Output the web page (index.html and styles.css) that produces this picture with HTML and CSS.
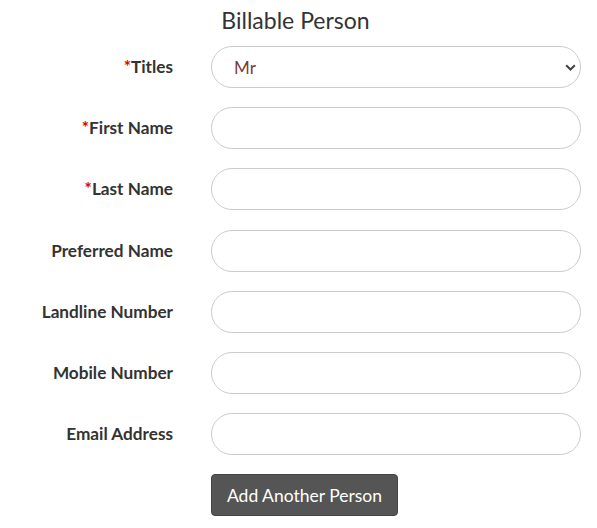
FILE: index.html
```html
<!DOCTYPE html>
<html>
<head>
<meta charset="utf-8">
<link rel="stylesheet" href="styles.css">
</head>
<body>
<div class="page">
  <h2 class="title">Billable Person</h2>
  <form class="form">
    <label class="label"><span class="req">*</span>Titles</label>
    <div class="field">
      <select class="control select">
        <option>Mr</option>
      </select>
      <svg class="chev" width="11" height="7" viewBox="0 0 11 7"><path d="M1.2 1.2 L5.5 5.5 L9.8 1.2" fill="none" stroke="#444" stroke-width="2"/></svg>
    </div>
    <label class="label"><span class="req">*</span>First Name</label>
    <div class="field"><input class="control" type="text"></div>
    <label class="label"><span class="req">*</span>Last Name</label>
    <div class="field"><input class="control" type="text"></div>
    <label class="label">Preferred Name</label>
    <div class="field"><input class="control" type="text"></div>
    <label class="label">Landline Number</label>
    <div class="field"><input class="control" type="text"></div>
    <label class="label">Mobile Number</label>
    <div class="field"><input class="control" type="text"></div>
    <label class="label">Email Address</label>
    <div class="field"><input class="control" type="text"></div>
    <div></div>
    <div class="field"><button type="button" class="btn">Add Another Person</button></div>
  </form>
</div>
</body>
</html>
```
FILE: styles.css
```css
html, body {
  margin: 0;
  padding: 0;
  background: #fff;
}
body {
  font-family: Lato, "Open Sans", sans-serif;
  color: #333;
}
.page {
  width: 597px;
}
.title {
  margin: 0;
  padding-top: 6px;
  padding-right: 6px;
  height: 46px;
  box-sizing: border-box;
  text-align: center;
  font-weight: 400;
  font-size: 23px;
  line-height: 28px;
  color: #333;
}
.form {
  display: grid;
  grid-template-columns: 173px 370px;
  column-gap: 38px;
  row-gap: 19.2px;
  align-items: center;
}
.label {
  text-align: right;
  font-weight: 700;
  font-size: 17.2px;
  line-height: 20px;
  margin-top: 0;
  color: #333;
}
.req {
  color: #e00000;
}
.field {
  position: relative;
  height: 42px;
}
.control {
  display: block;
  box-sizing: border-box;
  width: 370px;
  height: 42px;
  border: 1px solid #ccc;
  border-radius: 21px;
  background: #fff;
  padding: 0 20px;
  font-family: Lato, sans-serif;
  font-size: 17px;
  color: #333;
  outline: none;
}
.select {
  -webkit-appearance: none;
  appearance: none;
  padding-left: 22px;
  color: #7a3a3a;
}
.chev {
  position: absolute;
  right: 5px;
  top: 18px;
  pointer-events: none;
}
.btn {
  display: block;
  width: 187px;
  height: 42px;
  box-sizing: border-box;
  background: #555;
  color: #fff;
  border: 1px solid #444;
  border-radius: 4px;
  font-family: Lato, sans-serif;
  font-size: 17.5px;
  padding: 0;
}
```
